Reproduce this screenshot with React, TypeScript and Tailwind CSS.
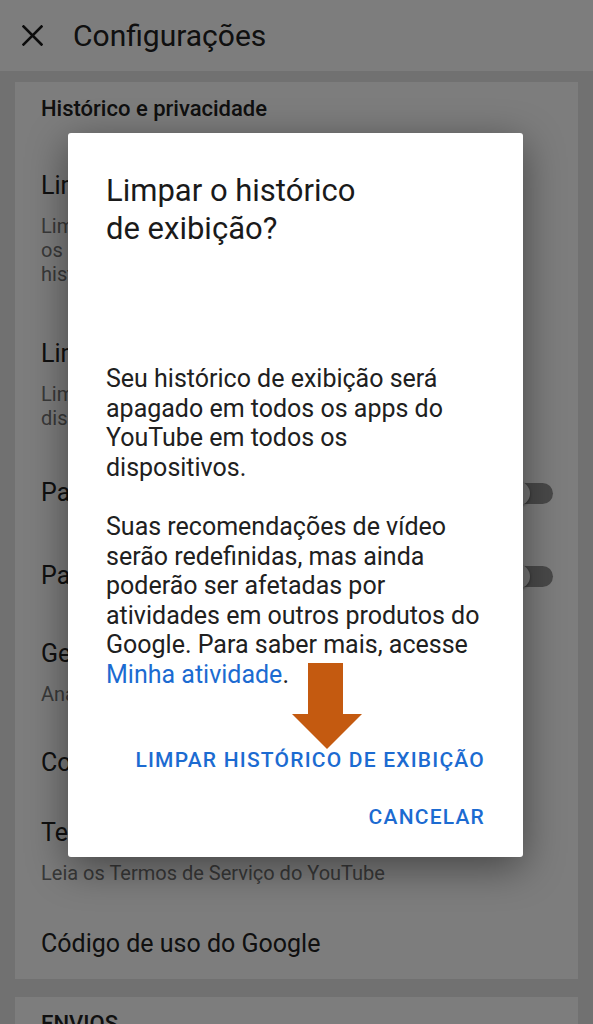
import React from "react"

type Item = {
    title: string
    sub?: string[]
    toggle?: boolean
    pt: string
}

const items: Item[] = [
    {
        title: "Limpar histórico de exibição",
        sub: [
            "Limpa o histórico de exibição de todos os apps",
            "os dispositivos. Essa ação não pode ser desfeita, e o",
            "histórico não poderá ser recuperado.",
        ],
        pt: "pt-[51px]",
    },
    {
        title: "Limpar histórico de pesquisa",
        sub: ["Limpa as pesquisas feitas nesta conta em todos os", "dispositivos"],
        pt: "pt-[54px]",
    },
    { title: "Pausar histórico de exibição", toggle: true, pt: "pt-[49px]" },
    { title: "Pausar histórico de pesquisa", toggle: true, pt: "pt-[55px]" },
    {
        title: "Gerenciar todas as atividades",
        sub: ["Analise e exclua suas atividades"],
        pt: "pt-[50px]",
    },
    { title: "Controles de privacidade", pt: "pt-[43px]" },
    {
        title: "Termos e Política de Privacidade",
        sub: ["Leia os Termos de Serviço do YouTube"],
        pt: "pt-[42px]",
    },
    { title: "Código de uso do Google", pt: "pt-[45px]" },
]

function CloseIcon() {
    return (
        <svg width="21" height="21" viewBox="0 0 21 21" className="shrink-0">
            <path d="M1.5 1.5 19.5 19.5M19.5 1.5 1.5 19.5" stroke="#1a1a1a" strokeWidth="2.6" strokeLinecap="square" />
        </svg>
    )
}

function Toggle() {
    return (
        <div className="relative h-[21px] w-[44px] shrink-0 rounded-full bg-[#959595]">
            {/* thumb, off position */}
            <div className="absolute left-[-4px] top-[-2px] h-[25px] w-[25px] rounded-full bg-[#f1f1f1] shadow-[0_1px_3px_rgba(0,0,0,0.4)]" />
        </div>
    )
}

export default function App() {
    return (
        <div className="relative h-[1024px] w-[593px] overflow-hidden bg-[#e6e6e6] font-['Roboto',sans-serif]">
            {/* Top bar */}
            <header className="flex h-[71px] items-center bg-white pl-[22px]">
                <CloseIcon />
                <h1 className="ml-[30px] text-[30px] leading-none text-[#212121]">Configurações</h1>
            </header>

            <div className="px-[15px] pt-[11px]">
                {/* Histórico e privacidade */}
                <section className="bg-white pb-[21px] pl-[26px] pr-[25px] pt-[15px]">
                    <h2 className="text-[22px] font-medium leading-[24px] text-[#212121]">Histórico e privacidade</h2>
                    {items.map((item) => (
                        <div key={item.title} className={item.pt}>
                            <div className="flex items-center justify-between">
                                <span className="text-[25px] leading-[28px] text-[#212121]">{item.title}</span>
                                {item.toggle && <Toggle />}
                            </div>
                            {item.sub && (
                                <div className="mt-[14px] text-[20px] leading-[24px] text-[#757575]">
                                    {item.sub.map((line) => (
                                        <div key={line} className="whitespace-nowrap">{line}</div>
                                    ))}
                                </div>
                            )}
                        </div>
                    ))}
                </section>

                {/* Envios */}
                <section className="mt-[18px] h-[80px] bg-white pl-[26px] pt-[15px]">
                    <h2 className="text-[22px] font-medium leading-[24px] text-[#212121]">ENVIOS</h2>
                </section>
            </div>

            {/* Scrim */}
            <div className="absolute inset-0 bg-black/[0.51]" />

            {/* Dialog */}
            <div className="absolute left-[68px] top-[133px] flex h-[724px] w-[455px] flex-col rounded-[3px] bg-white px-[38px] pt-[39px] shadow-[0_10px_40px_rgba(0,0,0,0.45)]">
                <h3 className="text-[31px] leading-[38px] text-[#1a1a1a]">
                    Limpar o histórico
                    <br />
                    de exibição?
                </h3>
                <div className="mt-[116px] w-[376px] text-[25px] leading-[29.5px] text-[#202020]">
                    <p>Seu histórico de exibição será apagado em todos os apps do YouTube em todos os dispositivos.</p>
                    <p className="mt-[30px]">
                        Suas recomendações de vídeo serão redefinidas, mas ainda poderão ser afetadas por atividades em outros produtos do Google. Para saber mais, acesse{" "}
                        <span className="text-[#1c6bd1]">Minha atividade</span>.
                    </p>
                </div>
                <div className="mt-[59px] flex flex-col items-end gap-[33px]">
                    <button className="text-[21px] font-medium leading-[24px] tracking-[1.2px] text-[#1c6bd1]">
                        LIMPAR HISTÓRICO DE EXIBIÇÃO
                    </button>
                    <button className="text-[21px] font-medium leading-[24px] tracking-[1.2px] text-[#1c6bd1]">
                        CANCELAR
                    </button>
                </div>
            </div>

            {/* Orange pointer arrow */}
            <svg className="absolute left-[292px] top-[663px]" width="70" height="86" viewBox="0 0 70 86">
                <polygon points="16,0 51,0 51,51 70,51 35,86 0,51 16,51" fill="#c45a10" />
            </svg>
        </div>
    )
}
